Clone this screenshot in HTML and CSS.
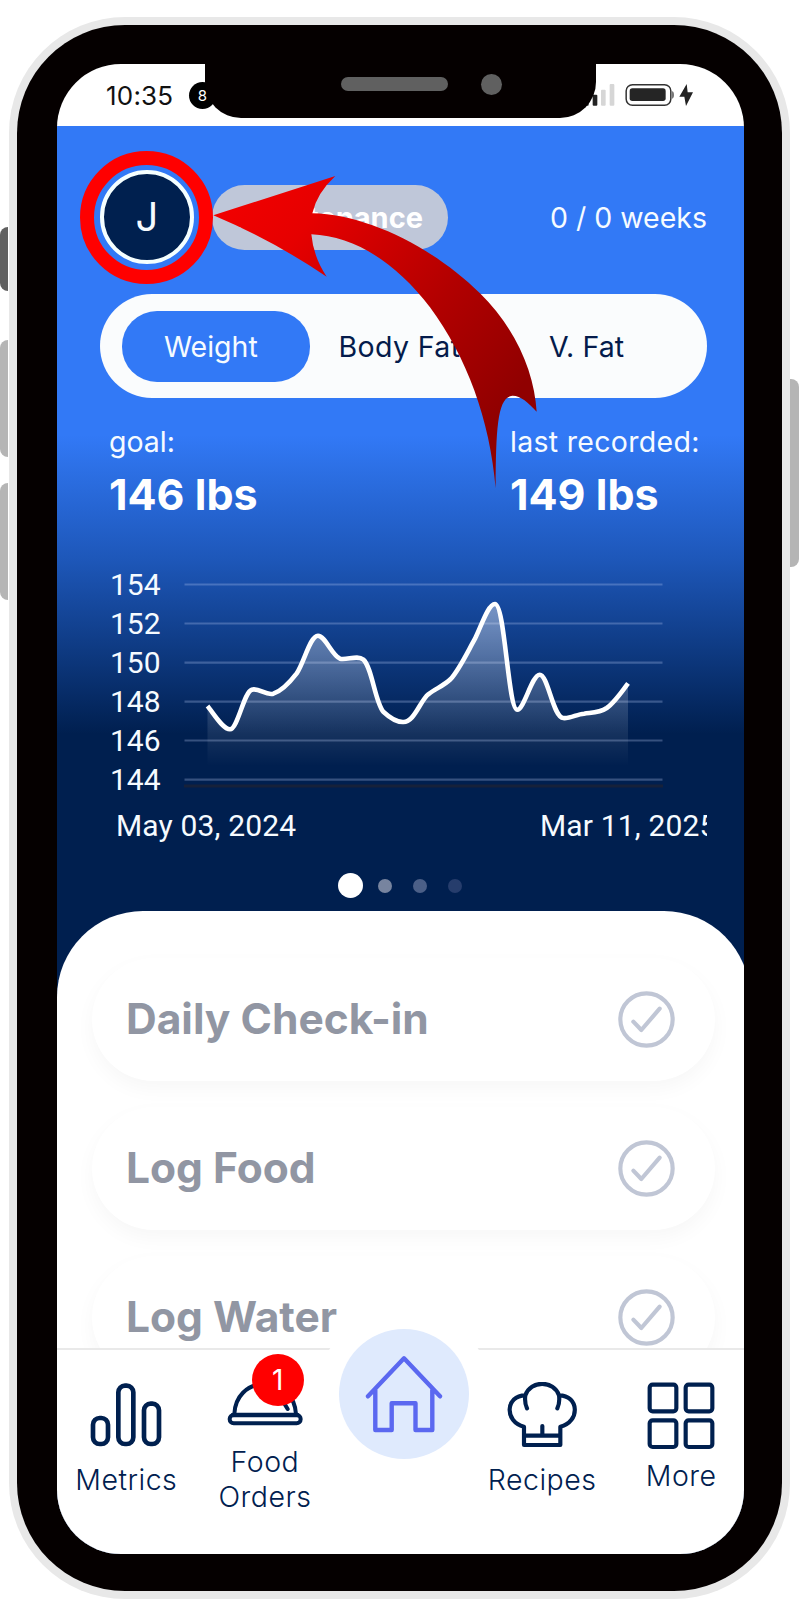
FILE: index.html
```html
<!DOCTYPE html>
<html lang="en">
<head>
<meta charset="utf-8">
<title>Home</title>
<link rel="stylesheet" href="styles.css">
</head>
<body>
<div class="page">
  <div class="rail rail-left"><i class="key key-dark"></i><i class="key key-up"></i><i class="key key-down"></i></div>
  <div class="device">
    <div class="bezel">
      <div class="screen">
        <header class="status">
          <span class="time">10:35</span>
          <span class="count">8</span>
          <svg class="signal" width="104" height="26" viewBox="0 0 312 78">
            <g fill="#222"><rect x="-8" y="46" width="13" height="19" rx="3"/><rect x="17" y="32" width="14" height="33" rx="3"/></g>
            <g fill="#d6d6d6"><rect x="42" y="17" width="14" height="48" rx="3"/><rect x="68" y="0" width="14" height="65" rx="3"/></g>
            <rect x="117.500" y="2" width="134" height="62" rx="19" fill="#fff" stroke="#333" stroke-width="4.500"/>
            <rect x="128" y="13" width="108" height="38" rx="8" fill="#252525"/>
            <path d="M255 22q6 1 6 11t-6 11z" fill="#777"/>
            <path d="M299 0L277 38H292L297 66L318 25H302Z" fill="#222"/>
          </svg>
        </header>
        <div class="app">
          <section class="hero">
            <div class="top">
              <div class="avatar">J</div>
              <div class="phase">Maintenance</div>
              <div class="weeks">0 / 0 weeks</div>
            </div>
            <div class="tabs">
              <span class="tab active">Weight</span><span class="tab tab-mid">Body Fat</span><span class="tab tab-last">V. Fat</span>
            </div>
            <div class="stats">
              <div class="stat"><span class="label">goal:</span><b>146 lbs</b></div>
              <div class="stat"><span class="label wide">last recorded:</span><b>149 lbs</b></div>
            </div>
            <div class="chart">
              <div class="scale"><span>154</span><span>152</span><span>150</span><span>148</span><span>146</span><span>144</span></div>
              <svg class="plot" width="480" height="234" viewBox="184 565 480 234">
                <defs><linearGradient id="fade" gradientUnits="userSpaceOnUse" x1="0" y1="604" x2="0" y2="766"><stop offset="0" stop-color="#fff" stop-opacity=".42"/><stop offset="1" stop-color="#fff" stop-opacity="0"/></linearGradient></defs>
                <g stroke="#b9cdf5" stroke-opacity=".29" stroke-width="2.200"><path d="M184.500 584.500H662.500M184.500 623.500H662.500M184.500 662.700H662.500M184.500 701.600H662.500M184.500 740.500H662.500M184.500 779.600H662.500"/></g>
                <path d="M184 786H663" stroke="#16213a" stroke-width="3"/>
                <path fill="url(#fade)" d="M207.500 706C214 714 223 729.300 230 729.300C237.500 729.300 244 692 251.700 689.700C259 687.500 266 696 273.300 693.700C281 691 290 682 296.700 673.300C304 663 310 635.700 318 635.700C325 635.700 332 655.500 340 658.700C347 660.500 357 654.500 363.300 659.500C372 667 375 702 383.300 711.700C389 717 396 722 402.700 722C414 723 420 701 428.300 694.300C436 688.500 444 685.500 450.700 679C459 670 467 653 475 638.700C481 627 488 604 495 604C505 604 508 709.700 517.300 709.700C524 709.700 532 674.700 539.700 674.700C548 674.700 553 717.500 563.300 718C570 719 577 714 584 713.700C592 712.500 599 713 606.700 708C614 703 621 693 628 683.300V766H207.500Z"/>
                <path fill="none" stroke="#fff" stroke-width="4.600" d="M207.500 706C214 714 223 729.300 230 729.300C237.500 729.300 244 692 251.700 689.700C259 687.500 266 696 273.300 693.700C281 691 290 682 296.700 673.300C304 663 310 635.700 318 635.700C325 635.700 332 655.500 340 658.700C347 660.500 357 654.500 363.300 659.500C372 667 375 702 383.300 711.700C389 717 396 722 402.700 722C414 723 420 701 428.300 694.300C436 688.500 444 685.500 450.700 679C459 670 467 653 475 638.700C481 627 488 604 495 604C505 604 508 709.700 517.300 709.700C524 709.700 532 674.700 539.700 674.700C548 674.700 553 717.500 563.300 718C570 719 577 714 584 713.700C592 712.500 599 713 606.700 708C614 703 621 693 628 683.300"/>
              </svg>
            </div>
            <div class="dates"><span>May 03, 2024</span><span>Mar 11, 2025</span></div>
            <div class="dots"><i class="dot on"></i><i class="dot d2"></i><i class="dot d3"></i><i class="dot d4"></i></div>
          </section>
          <main class="sheet">
            <div class="card"><span>Daily Check-in</span><svg class="check" width="57" height="57" viewBox="0 0 171 171"><circle cx="85.500" cy="85.500" r="78.500"/><path d="M46 92L70 117L125 53"/></svg></div>
            <div class="card"><span>Log Food</span><svg class="check" width="57" height="57" viewBox="0 0 171 171"><circle cx="85.500" cy="85.500" r="78.500"/><path d="M46 92L70 117L125 53"/></svg></div>
            <div class="card"><span>Log Water</span><svg class="check" width="57" height="57" viewBox="0 0 171 171"><circle cx="85.500" cy="85.500" r="78.500"/><path d="M46 92L70 117L125 53"/></svg></div>
          </main>
          <nav class="nav">
            <a class="item metrics">
              <svg width="72" height="64" viewBox="270 248 216 192" fill="none" stroke="#00204f" stroke-width="14"><rect x="279" y="353" width="45" height="78" rx="20"/><rect x="355" y="256" width="45" height="175" rx="20"/><rect x="432" y="310" width="45" height="121" rx="20"/></svg>
              <span>Metrics</span>
            </a>
            <a class="item food">
              <span class="dish">
                <svg width="76" height="56" viewBox="682 208 228 168" fill="none" stroke="#00204f" stroke-width="12" stroke-linecap="round" stroke-linejoin="round"><path d="M704 340C706 290 740 250 797 250C852 250 886 290 889 340M797 250V232M856 312L864 325"/><rect x="690" y="343" width="213" height="25" rx="12"/><path d="M700 343H893" stroke-width="14"/></svg>
                <b class="badge">1</b>
              </span>
              <span>Food<br>Orders</span>
            </a>
            <a class="item home"><span class="halo"><span class="disc"><svg width="78" height="80" viewBox="365 1355 78 80" fill="none" stroke="#5b68f0" stroke-width="4.400" stroke-linecap="round" stroke-linejoin="round"><path d="M368 1397.300L404 1359.300L440 1397.300M375.300 1391V1431H391.700V1404.300H415.500V1431H432.300V1391"/></svg></span></span></a>
            <a class="item recipes">
              <svg width="70" height="66" viewBox="321 243 210 198" fill="none" stroke="#00204f" stroke-width="12.500" stroke-linecap="round" stroke-linejoin="round"><path d="M372 432V377C312 363 316 283 376 283C391 237 462 237 477 283C538 283 541 363 481 377V432ZM376 283Q373 305 381 322M477 283Q480 305 472 322M372 404H481M427 375V402"/></svg>
              <span>Recipes</span>
            </a>
            <a class="item more">
              <svg width="68" height="68" viewBox="741 244 204 204" fill="none" stroke="#00204f" stroke-width="12.500"><rect x="749" y="252" width="80" height="80" rx="9"/><rect x="857" y="252" width="80" height="80" rx="9"/><rect x="749" y="359" width="80" height="80" rx="9"/><rect x="857" y="359" width="80" height="80" rx="9"/></svg>
              <span>More</span>
            </a>
          </nav>
        </div>
        <div class="notch"><i class="speaker"></i><i class="camera"></i></div>
      </div>
    </div>
  </div>
  <div class="rail rail-right"><i class="key key-power"></i></div>
  <i class="ring"></i>
  <svg class="arrow" width="350" height="340" viewBox="0 0 1050 1020">
    <defs><linearGradient id="red" gradientUnits="userSpaceOnUse" x1="150" y1="80" x2="950" y2="700"><stop offset="0" stop-color="#f00000"/><stop offset=".2" stop-color="#e60000"/><stop offset=".65" stop-color="#b20000"/><stop offset="1" stop-color="#900000"/></linearGradient></defs>
    <path fill="url(#red)" d="M40 166Q230 105 406 48Q350 100 337 160C500 163 700 262 840 400C950 508 1003 640 1010 755C985 727 960 706 937 707C893 712 888 800 887 985C870 780 800 590 690 442C590 310 465 228 334 223Q340 290 380 350Q220 242 40 166Z"/>
  </svg>
</div>
</body>
</html>
```
FILE: styles.css
```css
* { box-sizing: border-box; }
body { margin: 0; background: #fff; font-family: Inter, "Liberation Sans", sans-serif; }
.page { position: relative; display: flex; width: 800px; height: 1600px; overflow: hidden; }
i, b { display: block; font-style: normal; }

.rail { display: flex; flex-direction: column; width: 9px; }
.rail-left { padding-top: 227px; }
.rail-right { padding-top: 379px; width: 10px; }
.key { width: 8px; background: #b5b5b5; border-radius: 8px 0 0 8px; }
.key-dark { height: 64px; background: #606060; }
.key-up { height: 117px; margin-top: 49px; }
.key-down { height: 117px; margin-top: 26px; }
.key-power { width: 9px; height: 188px; border-radius: 0 8px 8px 0; }

.device { width: 781px; height: 1582px; margin-top: 17px; padding: 8px; background: #e8e8e8; border-radius: 116px; }
.bezel { height: 1566px; padding: 39px 38px 37px 40px; background: #050000; border-radius: 108px; }
.screen { position: relative; height: 1490px; overflow: hidden; background: #fff; border-radius: 64px; }

.status { display: flex; align-items: center; width: 693px; height: 62px; padding: 1px 59px 0 49px; }
.time { width: 83px; font-size: 26px; color: #111; letter-spacing: .2px; }
.count { width: 27px; height: 27px; border-radius: 50%; background: #000; color: #fff; font-size: 15px; line-height: 27px; text-align: center; }
.signal { margin: 3px 0 0 auto; overflow: visible; }
.notch { position: absolute; left: 148px; top: 0; display: flex; align-items: flex-start; width: 391px; height: 54px; padding: 10px 94px 0 136px; justify-content: space-between; background: #050000; border-radius: 0 0 36px 36px; }
.speaker { width: 107px; height: 14px; margin-top: 3px; border-radius: 7px; background: #606060; }
.camera { width: 21px; height: 21px; border-radius: 50%; background: #606060; }

.app { width: 693px; height: 1428px; background: linear-gradient(#3279f6 0, #3279f6 309px, #1e58bb 430px, #001f4f 608px, #001f4f); }
.hero { height: 785px; padding: 44px 43px 0; color: #f6fbff; }
.top { display: flex; align-items: center; height: 94px; }
.avatar { width: 94px; height: 94px; border: 4px solid #f5ffff; border-radius: 50%; background: #00204f; font-size: 40px; line-height: 86px; text-align: center; font-weight: 400; }
.phase { width: 236px; height: 65px; margin-left: 18px; padding-right: 25px; border-radius: 33px; background: #bfc7d9; color: #fff; font-size: 29px; font-weight: 700; line-height: 65px; text-align: right; }
.weeks { margin-left: auto; font-size: 28.500px; }

.tabs { display: grid; grid-template-columns: repeat(3, 1fr); height: 104px; margin-top: 30px; padding: 17px 22px 18px; border-radius: 52px; background: #fafcfd; color: #041b4b; }
.tab { font-size: 28.500px; line-height: 71px; text-align: center; border-radius: 35px; }
.active { background: #3279f6; color: #f6fbff; padding-right: 10px; }
.tab-mid { padding-right: 8px; letter-spacing: .4px; }
.tab-last { padding-right: 9px; letter-spacing: .1px; }

.stats { display: flex; justify-content: space-between; height: 125px; padding: 26px 0 0 9px; }
.stat { width: 197px; white-space: nowrap; }
.label { display: block; font-size: 28.500px; line-height: 35px; }
.wide { letter-spacing: .3px; }
.stat b { color: #fff; font-size: 43px; line-height: 50px; margin-top: 10px; }

.chart { display: flex; height: 240px; margin-top: 42px; padding-left: 10px; font-family: Roboto, "Liberation Sans", sans-serif; }
.scale { display: flex; flex-direction: column; width: 74px; font-size: 30px; line-height: 39px; }
.plot { display: block; }
.dates { display: flex; justify-content: space-between; height: 41px; padding-left: 16px; overflow: hidden; white-space: nowrap; font: 30px/42px Roboto, "Liberation Sans", sans-serif; letter-spacing: .15px; }
.dates span:last-child { width: 167px; }
.dots { display: flex; align-items: center; justify-content: center; gap: 21px; height: 25px; margin-top: 27px; padding-right: 7px; }
.dot { width: 14px; height: 14px; border-radius: 50%; background: #77849f; }
.on { width: 25px; height: 25px; background: #fff; margin-right: -6px; }
.d3 { background: #4b5f87; }
.d4 { background: #263d6c; }

.sheet { height: 437px; padding: 47px 35px 0; display: flex; flex-direction: column; gap: 26px; overflow: hidden; background: #fff; border-radius: 86px 86px 0 0; }
.card { display: flex; flex: none; align-items: center; justify-content: space-between; height: 123px; padding: 0 40px 0 34px; border-radius: 62px; background: #fff; box-shadow: 0 8px 20px rgba(0, 0, 0, .035); color: #9196a3; font-size: 42.500px; font-weight: 700; }
.card span { padding-bottom: 2px; }
.check { fill: none; stroke: #c0c6d5; stroke-width: 12.500px; stroke-linecap: round; stroke-linejoin: round; }

.nav { display: grid; grid-template-columns: repeat(5, minmax(0, 1fr)); height: 206px; background: #fff; border-top: 2px solid #e9e9e9; color: #00204f; font-size: 28.500px; font-weight: 300; line-height: 34px; text-align: center; }
.item { display: flex; flex-direction: column; align-items: center; letter-spacing: .5px; }
.metrics { padding-top: 33px; }
.metrics svg { margin-bottom: 16px; }
.food { padding-top: 20px; line-height: 35px; }
.dish { position: relative; display: block; height: 56px; margin-bottom: 18px; }
.badge { position: absolute; left: 25px; top: -16px; width: 52px; height: 52px; border-radius: 50%; background: #f00; color: #fff; font-size: 28px; font-weight: 400; line-height: 52px; }
.halo { display: flex; flex: none; align-items: center; justify-content: center; width: 174px; height: 174px; margin-top: -43px; border-radius: 50%; background: #fff; }
.disc { display: flex; align-items: center; justify-content: center; width: 130px; height: 130px; border-radius: 50%; background: #dfeafd; }
.recipes { padding-top: 32px; }
.recipes svg { margin-bottom: 15px; }
.more { padding: 32px 0 0 1px; }
.more svg { margin-bottom: 9px; }

.ring { position: absolute; left: 80px; top: 151px; width: 133px; height: 133px; border: 14px solid #f00; border-radius: 50%; }
.arrow { position: absolute; left: 200px; top: 160px; }
```
